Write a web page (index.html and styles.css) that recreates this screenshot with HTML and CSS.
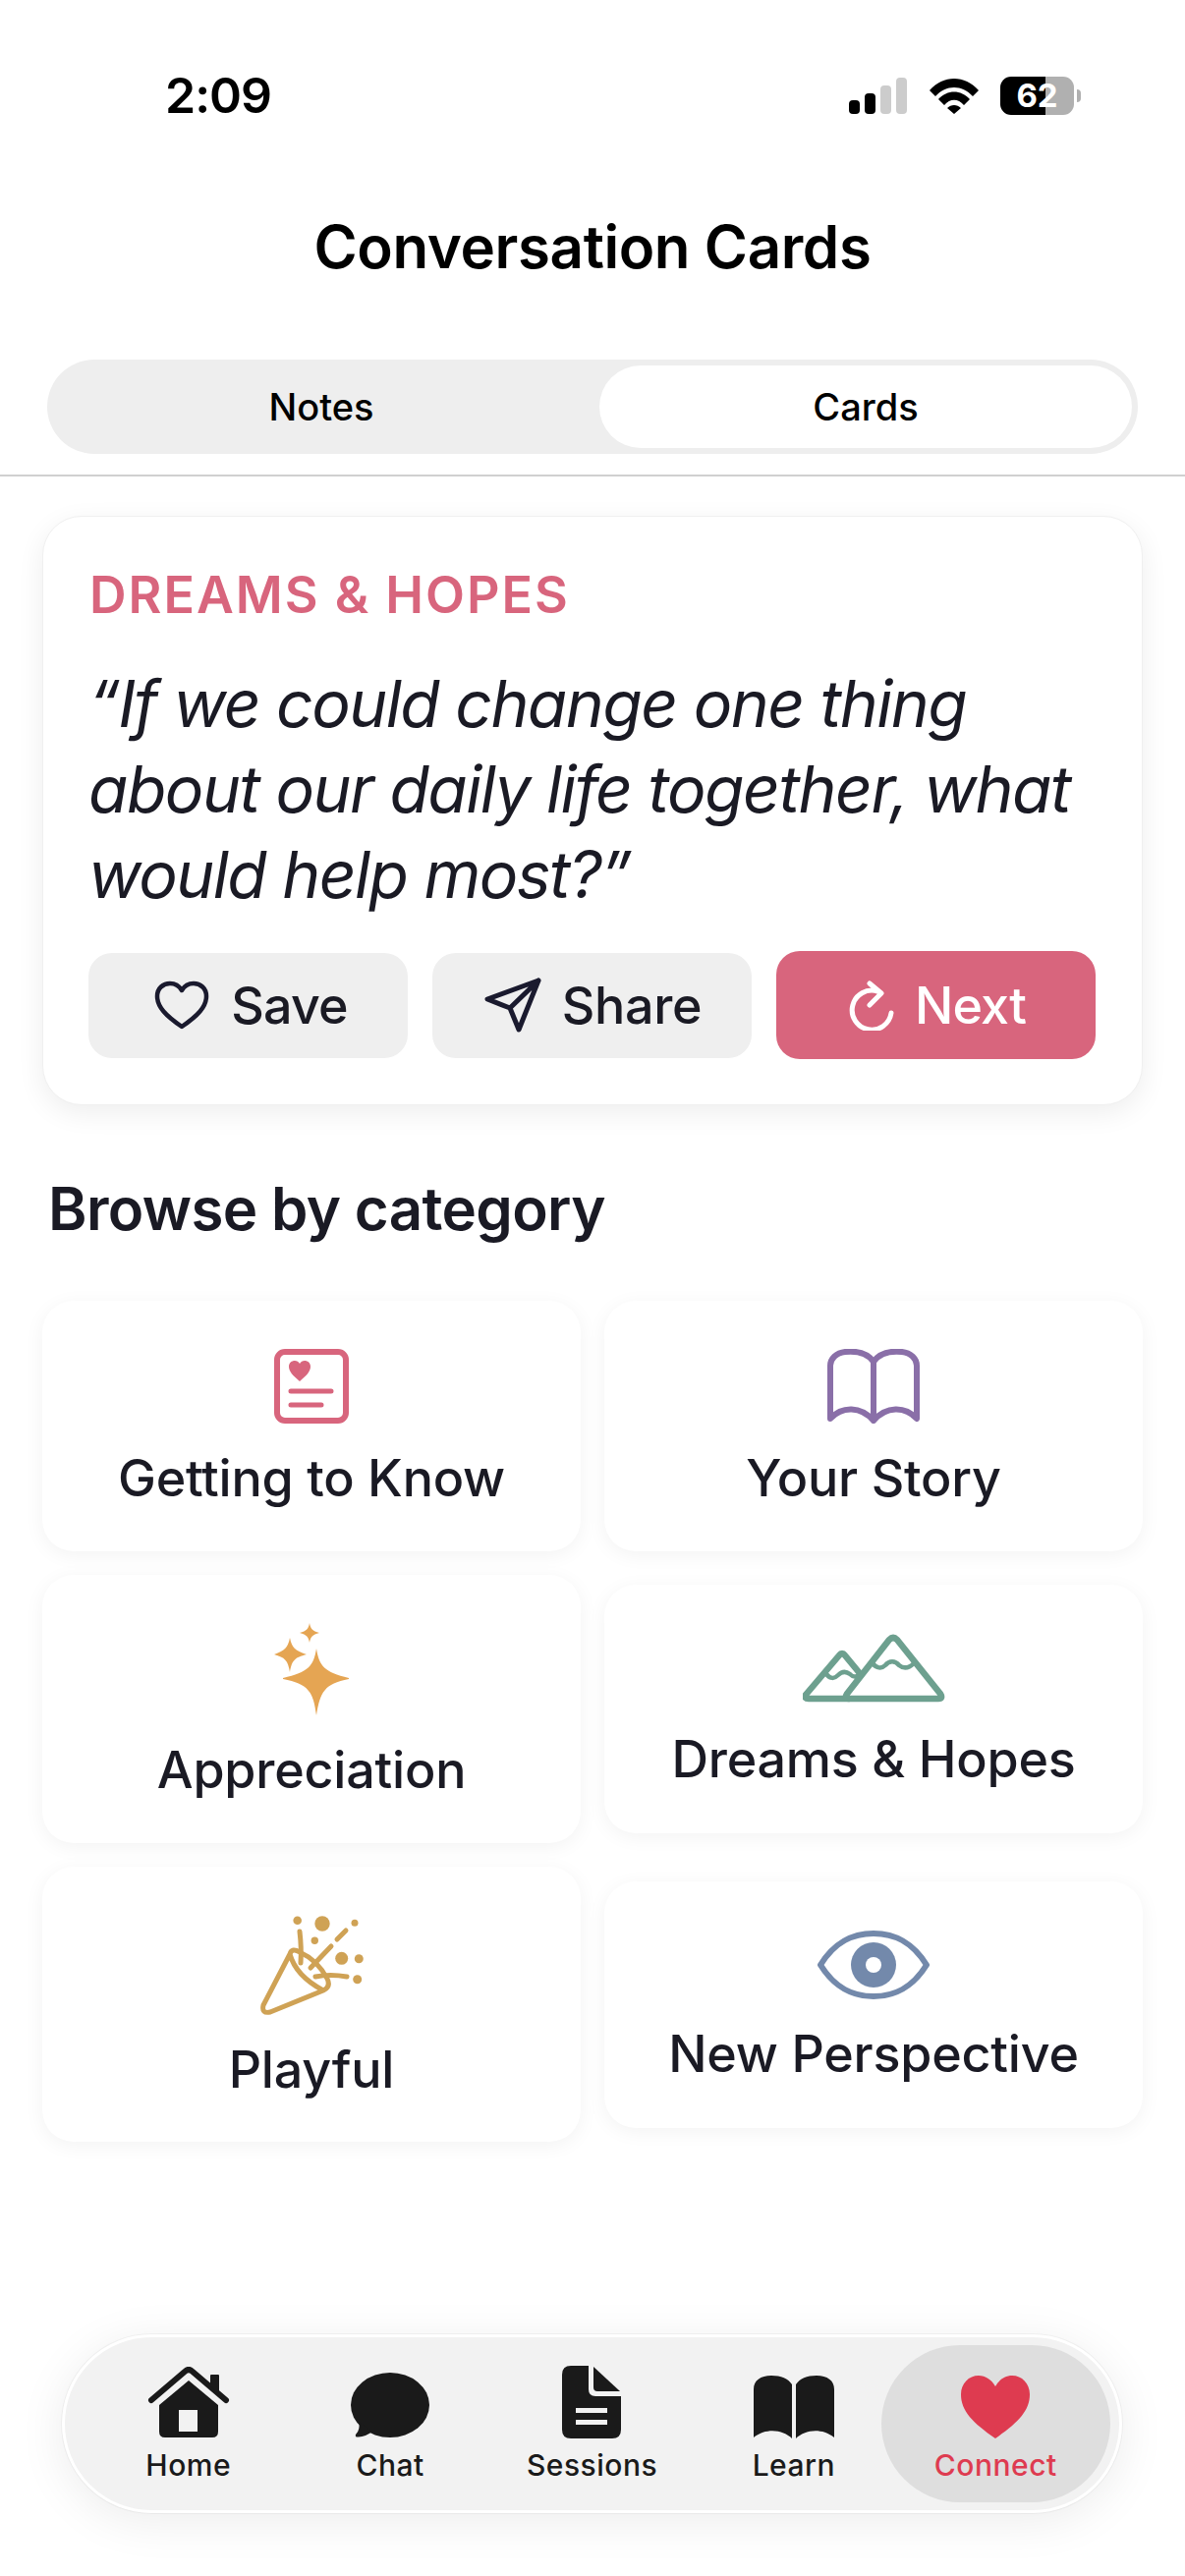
FILE: index.html
```html
<!DOCTYPE html>
<html lang="en">
<head>
  <meta charset="UTF-8" />
  <meta name="viewport" content="width=device-width, initial-scale=1.0" />
  <title>Conversation Cards</title>
  <link rel="stylesheet" href="styles.css">
</head>
<body>
  <div class="screen">
    <!-- Status bar -->
    <div class="status-bar">
      <span class="time">2:09</span>
      <div class="status-icons">
        <div class="signal">
          <i class="bar bar-1"></i><i class="bar bar-2"></i><i class="bar bar-3"></i><i class="bar bar-4"></i>
        </div>
        <svg class="wifi" width="50" height="37" viewBox="0 0 50 37">
          <path d="M0 13 C14 -3 36 -3 50 13 L44 19 C33 7 17 7 6 19Z M9 22 C18 12 32 12 41 22 L35 28 C29 21 21 21 15 28Z M18 31 C22 27 28 27 32 31 L25 37Z" fill="#000"/>
        </svg>
        <div class="battery"><span class="battery-level">62</span></div>
        <i class="battery-nub"></i>
      </div>
    </div>

    <h1 class="page-title">Conversation Cards</h1>

    <!-- Notes / Cards switch -->
    <div class="tabs">
      <div class="tab">Notes</div>
      <div class="tab tab-active">Cards</div>
    </div>
    <div class="divider"></div>

    <!-- Current card -->
    <section class="question-card">
      <div class="question-label">DREAMS &amp; HOPES</div>
      <p class="question-text">“If we could change one thing about our daily life together, what would help most?”</p>
      <div class="question-actions">
        <button class="action action-save">
          <svg width="56" height="50" viewBox="0 0 56 50" fill="none" stroke="#1a1a2e" stroke-width="4.5" stroke-linejoin="round">
            <path d="M28 47 C12 36 3 27 3 16 C3 8 9 3 16 3 C21 3 25 5 28 10 C31 5 35 3 40 3 C47 3 53 8 53 16 C53 27 44 36 28 47Z"/>
          </svg>
          Save
        </button>
        <button class="action action-share">
          <svg width="62" height="60" viewBox="11 8 62 60" fill="none" stroke="#1a1a2e" stroke-width="5" stroke-linejoin="round" stroke-linecap="round">
            <path d="M68 13 L16 32 L39 41 L48 63Z M68 13 L39 41"/>
          </svg>
          Share
        </button>
        <button class="action action-next">
          <svg width="50" height="52" viewBox="12 9 50 52" fill="none" stroke="#fff" stroke-width="5" stroke-linecap="round" stroke-linejoin="round">
            <path d="M58 43 A20 20 0 1 1 44 21 M36 13 L48 23 L36 35"/>
          </svg>
          Next
        </button>
      </div>
    </section>

    <h2 class="section-title">Browse by category</h2>

    <!-- Categories -->
    <div class="category-grid">
      <div class="category">
        <svg width="76" height="76" viewBox="0 0 76 76">
          <rect x="3" y="3" width="70" height="70" rx="8" fill="none" stroke="#d8657d" stroke-width="6"/>
          <path d="M26 33 C19 27 15 23 15 18 C15 14 18 12 21 12 C23 12 25 13 26 15 C27 13 29 12 31 12 C34 12 37 14 37 18 C37 23 33 27 26 33Z" fill="#d8657d"/>
          <path d="M17 43 H58 M17 57 H48" stroke="#d8657d" stroke-width="5" stroke-linecap="round"/>
        </svg>
        <span>Getting to Know</span>
      </div>
      <div class="category">
        <svg width="94" height="76" viewBox="0 0 94 76" fill="none" stroke="#8a6fa8" stroke-width="6" stroke-linejoin="round" stroke-linecap="round">
          <path d="M47 13 C40 3 28 2 18 3 C9 4 3 10 3 17 V71 C15 58 34 58 47 73 C60 58 79 58 91 71 V17 C91 10 85 4 76 3 C66 2 54 3 47 13Z M47 13 V73"/>
        </svg>
        <span>Your Story</span>
      </div>
      <div class="category">
        <svg width="76" height="94" viewBox="0 0 76 94" fill="#e5a553">
          <path d="M43 26 C46 44 51 50 76 56 Q76 57 76 57 C51 62 47 70 43 94 C40 70 35 62 9 57 Q9 56 9 56 C35 50 40 44 43 26Z"/>
          <path d="M16 15 C18 25 21 28 33 32 C21 35 18 38 16 50 C14 38 11 35 0 32 C11 28 14 25 16 15Z"/>
          <path d="M36 0 C37 6 39 8 46 10 C39 12 37 14 36 20 C35 14 33 12 26 10 C33 8 35 6 36 0Z"/>
        </svg>
        <span>Appreciation</span>
      </div>
      <div class="category">
        <svg width="145" height="72" viewBox="7 7 145 72" fill="none" stroke="#6da08f" stroke-width="6.500" stroke-linejoin="round" stroke-linecap="round">
          <path d="M54 73 H13 Q8 73 10 69 L44 29 Q47 25 50 29 L64 46"/>
          <path d="M31 48 C35 53 39 53 43 49 C47 45 51 45 55 48 C58 51 60 51 62 50" stroke-width="4.500"/>
          <path d="M95 13 Q99 9 103 13 L147 68 Q150 73 145 73 H54 Q49 73 52 68Z"/>
          <path d="M78 37 C82 42 87 43 91 39 C95 34 101 34 105 39 C110 43 115 42 120 37" stroke-width="4.500"/>
        </svg>
        <span>Dreams &amp; Hopes</span>
      </div>
      <div class="category">
        <svg width="106" height="102" viewBox="3 6 106 102" fill="#cfa255">
          <path d="M34 46 L7 98 Q5 107 14 105 L68 83 Q76 79 72 71 Q62 52 44 44 Q36 39 34 46 Q40 68 68 83" fill="none" stroke="#cfa255" stroke-width="5" stroke-linejoin="round"/>
          <path d="M44 23 Q46 40 45 55 M55 60 L76 38 M60 69 Q75 66 92 69 M82 31 L91 22" fill="none" stroke="#cfa255" stroke-width="5" stroke-linecap="round"/>
          <circle cx="41.700" cy="11.700" r="4.300"/>
          <circle cx="67" cy="15" r="7.700"/>
          <circle cx="100" cy="14.300" r="3.500"/>
          <circle cx="59.300" cy="32.300" r="3.700"/>
          <circle cx="86.700" cy="50.300" r="6.500"/>
          <circle cx="104.300" cy="50.700" r="4.500"/>
          <circle cx="102.700" cy="71.700" r="4.500"/>
        </svg>
        <span>Playful</span>
      </div>
      <div class="category">
        <svg width="114" height="70" viewBox="0 0 114 70">
          <path d="M3 35 C18 11 36 3 57 3 C78 3 96 11 111 35 C96 59 78 67 57 67 C36 67 18 59 3 35Z" fill="none" stroke="#7389ab" stroke-width="6" stroke-linejoin="round"/>
          <ellipse cx="57" cy="35" rx="23" ry="23" fill="#7389ab"/>
          <circle cx="57" cy="35" r="8" fill="#fff"/>
        </svg>
        <span>New Perspective</span>
      </div>
    </div>

    <!-- Floating tab bar -->
    <nav class="tab-bar">
      <a class="nav-item">
        <div class="nav-icon">
          <svg width="84" height="73" viewBox="0 0 84 73" fill="#1a1a1a">
            <path d="M4 34 L38 5 Q42 1 46 5 L80 34" fill="none" stroke="#1a1a1a" stroke-width="6" stroke-linecap="round" stroke-linejoin="round"/>
            <path d="M64 9 Q64 8 65 8 H72 Q73 8 73 9 V28 L64 20Z"/>
            <path d="M42 14 L72 39 V66 Q72 72 66 72 H18 Q12 72 12 66 V39Z M32 44 V66 H51 V44Z" fill-rule="evenodd"/>
          </svg>
        </div>
        <span>Home</span>
      </a>
      <a class="nav-item">
        <div class="nav-icon">
          <svg width="80" height="67" viewBox="0 0 80 67" fill="#1a1a1a">
            <ellipse cx="40" cy="33" rx="40" ry="33"/>
            <path d="M8 50 Q10 58 5 63 Q4 66 8 65.500 Q15 65 22 60Z"/>
          </svg>
        </div>
        <span>Chat</span>
      </a>
      <a class="nav-item">
        <div class="nav-icon">
          <svg width="60" height="74" viewBox="0 0 60 74" fill="#1a1a1a">
            <path d="M9 0 H27 V24 Q27 31 34 31 H60 V65 Q60 74 51 74 H9 Q0 74 0 65 V9 Q0 0 9 0Z M14 43 V48 H46 V43Z M14 55 V60 H46 V55Z" fill-rule="evenodd"/>
            <path d="M32 1 L59 26 H36 Q32 26 32 22Z"/>
          </svg>
        </div>
        <span>Sessions</span>
      </a>
      <a class="nav-item">
        <div class="nav-icon">
          <svg width="82" height="64" viewBox="0 0 82 64" fill="#1a1a1a">
            <path d="M39 9 V64 C31 56 14 52 0 63 V14 C0 5 7 0 18 0 C28 0 35 3 39 9Z"/>
            <path d="M43 9 V64 C51 56 68 52 82 63 V14 C82 5 75 0 64 0 C54 0 47 3 43 9Z"/>
          </svg>
        </div>
        <span>Learn</span>
      </a>
      <a class="nav-item nav-item-active">
        <div class="nav-icon">
          <svg width="70" height="64" viewBox="0 0 70 64" fill="#de3b50">
            <path d="M35 64 C12 48 0 36 0 19 C0 8 8 0 18 0 C25 0 31 4 35 11 C39 4 45 0 52 0 C62 0 70 8 70 19 C70 36 58 48 35 64Z"/>
          </svg>
        </div>
        <span>Connect</span>
      </a>
    </nav>
  </div>
</body>
</html>
```

FILE: styles.css
```css
/* Basic page setup */
body {
  font-family: Inter, "Noto Sans", sans-serif;
  background: #fff;
  margin: 0;
  padding: 0;
  color: #1a1a24;
}
.screen {
  position: relative;
  width: 1206px;
  height: 2622px;
  overflow: hidden;
  background: #fff;
}

/* Status bar */
.status-bar {
  display: flex;
  justify-content: space-between;
  align-items: center;
  height: 40px;
  padding: 77px 106px 0 168px;
}
.time {
  font-size: 50px;
  font-weight: 600;
  line-height: 40px;
  letter-spacing: -1px;
  color: #000;
}
.status-icons {
  display: flex;
  align-items: center;
}
.signal {
  display: flex;
  align-items: flex-end;
  gap: 5px;
  height: 37px;
  margin-right: 23px;
}
.bar {
  display: block;
  width: 11px;
  border-radius: 4px;
  background: #000;
}
.bar-1 { height: 14px; }
.bar-2 { height: 21px; }
.bar-3 { height: 29px; background: #ccc; }
.bar-4 { height: 37px; background: #ccc; }
.wifi {
  margin-right: 22px;
}
.battery {
  width: 75px;
  height: 39px;
  border-radius: 11px;
  background: linear-gradient(90deg, #000 62%, #b0b0b0 62%);
  display: flex;
  align-items: center;
  justify-content: center;
}
.battery-level {
  font-size: 33px;
  font-weight: 700;
  color: #fff;
}
.battery-nub {
  display: block;
  width: 4px;
  height: 13px;
  margin-left: 3px;
  border-radius: 0 4px 4px 0;
  background: #b0b0b0;
}

.page-title {
  margin: 98px 0 0;
  font-size: 60px;
  font-weight: 600;
  line-height: 72px;
  letter-spacing: -0.4px;
  text-align: center;
  color: #000;
}

/* Notes / Cards switch */
.tabs {
  display: flex;
  box-sizing: border-box;
  width: 1110px;
  height: 96px;
  margin: 79px 0 0 48px;
  padding: 6px;
  background: #eee;
  border-radius: 48px;
}
.tab {
  flex: 0 0 556px;
  box-sizing: border-box;
  padding-right: 10px;
  display: flex;
  align-items: center;
  justify-content: center;
  font-size: 38px;
  font-weight: 500;
  color: #000;
  border-radius: 42px;
}
.tab-active {
  flex: 0 0 542px;
  padding-right: 0;
  background: #fff;
}
.divider {
  height: 2px;
  margin-top: 21px;
  background: #d0d0d0;
}

/* Current card */
.question-card {
  box-sizing: border-box;
  width: 1120px;
  height: 600px;
  margin: 40px 0 0 43px;
  padding: 52px 47px 0;
  background: #fff;
  border: 1px solid #f0f0f0;
  border-radius: 40px;
  box-shadow: 0 8px 28px rgba(0,0,0,0.07);
}
.question-label {
  font-size: 52px;
  font-weight: 600;
  line-height: 56px;
  letter-spacing: 2px;
  color: #d8657d;
}
.question-text {
  margin: 39px 0 0 -1px;
  font-size: 66px;
  font-style: italic;
  line-height: 87px;
  letter-spacing: -1.55px;
  color: #1a1a24;
}
.question-actions {
  display: grid;
  grid-template-columns: repeat(3, 325px);
  gap: 25px;
  align-items: center;
  margin-top: 34px;
  margin-left: -1px;
}
.action {
  display: flex;
  align-items: center;
  justify-content: center;
  gap: 22px;
  height: 107px;
  padding: 0;
  border: none;
  border-radius: 24px;
  background: #efefef;
  font-family: inherit;
  font-size: 52px;
  font-weight: 500;
  letter-spacing: -0.8px;
  color: #1a1a24;
}
.action-save {
  padding-left: 6px;
}
.action-share {
  gap: 19px;
  letter-spacing: -0.3px;
}
.action-next {
  gap: 20px;
  height: 110px;
  background: #d8657d;
  color: #fff;
}

.section-title {
  margin: 69px 0 0 49px;
  font-size: 60px;
  font-weight: 600;
  line-height: 72px;
  letter-spacing: -0.65px;
  color: #1a1a24;
}

/* Categories */
.category-grid {
  display: grid;
  grid-template-columns: 548px 548px;
  grid-template-rows: 255px 273px 280px;
  gap: 24px;
  align-items: center;
  margin: 58px 0 0 43px;
}
.category {
  display: flex;
  flex-direction: column;
  align-items: center;
  justify-content: center;
  gap: 25px;
  height: 100%;
  box-sizing: border-box;
  padding-top: 5px;
  background: #fff;
  border-radius: 32px;
  box-shadow: 0 4px 20px rgba(0,0,0,0.05);
  font-size: 52px;
  font-weight: 500;
  line-height: 62px;
  letter-spacing: -0.2px;
  color: #1a1a24;
}
.category:nth-child(4) { height: 253px; }
.category:nth-child(n+5) { padding-top: 7px; }
.category:nth-child(6) { height: 251px; }

/* Floating tab bar */
.tab-bar {
  position: absolute;
  left: 63px;
  top: 2376px;
  box-sizing: border-box;
  width: 1079px;
  height: 182px;
  display: grid;
  grid-template-columns: repeat(5, 1fr);
  padding: 8px 23px;
  background: #f2f2f2;
  border: 3px solid #fff;
  border-radius: 91px;
  box-shadow: 0 8px 48px rgba(0,0,0,0.08), 0 0 0 1px rgba(0,0,0,0.04);
}
.nav-item {
  display: flex;
  flex-direction: column;
  align-items: center;
  padding-top: 21px;
  border-radius: 80px;
  font-size: 30px;
  font-weight: 500;
  letter-spacing: 0.5px;
  line-height: 36px;
  color: #1a1a1a;
}
.nav-icon {
  display: flex;
  align-items: flex-end;
  justify-content: center;
  height: 74px;
  margin-bottom: 9px;
}
.nav-item-active {
  margin: 0 -14px;
  background: #dedede;
  color: #de3b50;
}
```
